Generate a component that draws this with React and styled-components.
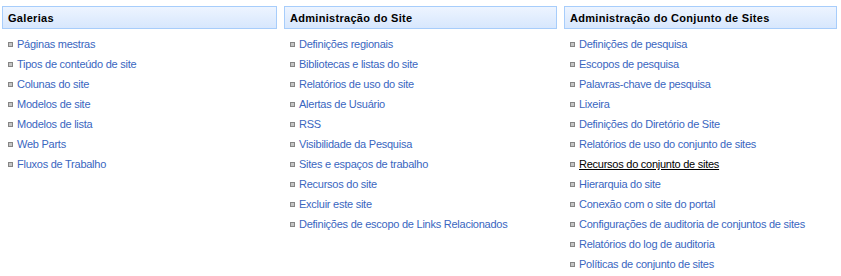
import React from "react";
import styled, { createGlobalStyle } from "styled-components";

const Global = createGlobalStyle`
  html, body { margin: 0; padding: 0; background: #fff; }
  body { font-family: Tahoma, "Liberation Sans", Arial, sans-serif; font-size: 11px; }
`;

const Page = styled.div`
  display: grid;
  grid-template-columns: 275px 273px 273px;
  column-gap: 7px;
  padding: 6px 0 0 2px;
  align-items: start;
`;

const Section = styled.section`
  display: flex;
  flex-direction: column;
`;

const Header = styled.div`
  box-sizing: border-box;
  height: 23px;
  border: 1px solid #a7cdfb;
  background: linear-gradient(#edf4ff, #d7e7fd);
  display: flex;
  align-items: center;
  padding-left: 5px;
  font-weight: bold;
  color: #000;
  font-size: 11px;
  letter-spacing: 0.3px;
`;

const List = styled.ul`
  list-style: none;
  margin: 5px 0 0 0;
  padding: 0;
`;

const Item = styled.li`
  display: flex;
  align-items: center;
  height: 20px;
  padding-left: 6px;
  gap: 4px;
`;

const Bullet = styled.span`
  box-sizing: border-box;
  width: 5px;
  height: 5px;
  border: 1px solid #858585;
  background: #c4c4c4;
  flex: none;
`;

const Link = styled.a`
  color: ${(p) => (p.$active ? "#000" : "#3966bf")};
  text-decoration: ${(p) => (p.$active ? "underline" : "none")};
  letter-spacing: -0.25px;
  white-space: nowrap;
  cursor: pointer;
`;

const sections = [
  {
    title: "Galerias",
    items: [
      "Páginas mestras",
      "Tipos de conteúdo de site",
      "Colunas do site",
      "Modelos de site",
      "Modelos de lista",
      "Web Parts",
      "Fluxos de Trabalho",
    ],
  },
  {
    title: "Administração do Site",
    items: [
      "Definições regionais",
      "Bibliotecas e listas do site",
      "Relatórios de uso do site",
      "Alertas de Usuário",
      "RSS",
      "Visibilidade da Pesquisa",
      "Sites e espaços de trabalho",
      "Recursos do site",
      "Excluir este site",
      "Definições de escopo de Links Relacionados",
    ],
  },
  {
    title: "Administração do Conjunto de Sites",
    items: [
      "Definições de pesquisa",
      "Escopos de pesquisa",
      "Palavras-chave de pesquisa",
      "Lixeira",
      "Definições do Diretório de Site",
      "Relatórios de uso do conjunto de sites",
      "Recursos do conjunto de sites",
      "Hierarquia do site",
      "Conexão com o site do portal",
      "Configurações de auditoria de conjuntos de sites",
      "Relatórios do log de auditoria",
      "Políticas de conjunto de sites",
    ],
  },
];

export default function App() {
  return (
    <>
      <Global />
      <Page>
        {sections.map((s) => (
          <Section key={s.title}>
            <Header>{s.title}</Header>
            <List>
              {s.items.map((it) => (
                <Item key={it}>
                  <Bullet />
                  <Link $active={it === "Recursos do conjunto de sites"}>{it}</Link>
                </Item>
              ))}
            </List>
          </Section>
        ))}
      </Page>
    </>
  );
}
